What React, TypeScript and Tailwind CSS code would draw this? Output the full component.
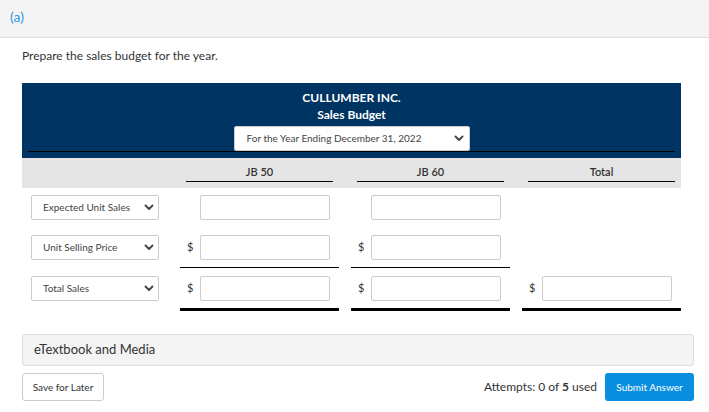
import React from 'react';

const Chevron = () => (
  <svg width="10" height="7" viewBox="0 0 10 7" className="shrink-0">
    <polyline points="1.5,1.5 5,5 8.5,1.5" fill="none" stroke="#4a4a4a" strokeWidth="2" strokeLinecap="round" strokeLinejoin="round" />
  </svg>
);

function FakeSelect({ label, className }: { label: string; className: string }) {
  return (
    <div className={`flex items-center justify-between bg-white border border-[#cccccc] rounded-[2px] text-[10px] text-[#444] ${className}`}>
      <span>{label}</span>
      <Chevron />
    </div>
  );
}

function Cell({ dollar, line }: { dollar?: boolean; line?: 'single' | 'double' }) {
  const border = line === 'single' ? 'pb-[7px] border-b border-black' : line === 'double' ? 'pb-[7px] border-b-[3px] border-black' : '';
  return (
    <div className={border}>
      <div className="flex items-center h-[25px]">
        <span className="w-[20px] pl-[7px] text-[11px] text-[#333]">{dollar ? '$' : ''}</span>
        <div className="w-[130px] h-[25px] bg-white border border-[#cccccc] rounded-[2px]" />
      </div>
    </div>
  );
}

export default function App() {
  return (
    <div className="w-[709px] h-[412px] bg-white overflow-hidden text-[#333]" style={{ fontFamily: 'Lato, "Noto Sans", sans-serif' }}>
      <div className="h-[38px] bg-[#f4f4f4] border-b border-[#dddddd] px-[10px] pt-[4px]">
        <span className="text-[14px] text-[#2b9be0]">(a)</span>
      </div>

      <div className="pl-[22px] pr-[15px]">
        <p className="mt-[10px] text-[12px] leading-[16px] text-[#333]">Prepare the sales budget for the year.</p>

        <div className="mt-[19px] w-[659px]">
          <div className="bg-[#003462] pt-[7px] pb-[6px] px-[6px] flex flex-col items-center">
            <div className="text-white font-bold text-[12px] leading-[16px]">CULLUMBER INC.</div>
            <div className="text-white font-bold text-[12px] leading-[17px]">Sales Budget</div>
            <FakeSelect label="For the Year Ending December 31, 2022" className="mt-[3px] w-[236px] h-[25px] pl-[12px] pr-[5px] text-[#333]" />
            <div className="w-full h-px bg-black" />
          </div>

          <div className="bg-[#e5e5e5] h-[30px] grid grid-cols-[146px_159px_159px_159px] gap-x-[12px]">
            <div />
            {['JB 50', 'JB 60', 'Total'].map((h) => (
              <div key={h} className="px-[6px] pt-[6px]">
                <div className="text-center text-[11px] font-semibold leading-[16px] pb-[1px] border-b border-black">{h}</div>
              </div>
            ))}
          </div>

          <div className="grid grid-cols-[146px_159px_159px_159px] gap-x-[12px] pt-[7px]">
            <div className="pl-[9px]">
              <FakeSelect label="Expected Unit Sales" className="w-[128px] h-[25px] pl-[11px] pr-[4px]" />
            </div>
            <Cell />
            <Cell />
            <div />
          </div>

          <div className="grid grid-cols-[146px_159px_159px_159px] gap-x-[12px] mt-[15px]">
            <div className="pl-[9px]">
              <FakeSelect label="Unit Selling Price" className="w-[128px] h-[25px] pl-[11px] pr-[4px]" />
            </div>
            <Cell dollar line="single" />
            <Cell dollar line="single" />
            <div />
          </div>

          <div className="grid grid-cols-[146px_159px_159px_159px] gap-x-[12px] mt-[8px]">
            <div className="pl-[9px]">
              <FakeSelect label="Total Sales" className="w-[128px] h-[25px] pl-[11px] pr-[4px]" />
            </div>
            <Cell dollar line="double" />
            <Cell dollar line="double" />
            <Cell dollar line="double" />
          </div>
        </div>

        <div className="mt-[23px] h-[32px] bg-[#f4f4f4] border border-[#dddddd] rounded-[3px] flex items-center pl-[11px] text-[13px] text-[#333]">
          eTextbook and Media
        </div>

        <div className="mt-[7px] flex items-center justify-between">
          <button className="h-[28px] w-[82px] bg-white border border-[#cccccc] rounded-[3px] text-[10px] text-[#333]">Save for Later</button>
          <div className="flex items-center gap-[8px]">
            <span className="text-[12px] text-[#333]">Attempts: 0 of <span className="font-bold">5</span> used</span>
            <button className="h-[28px] w-[89px] bg-[#0a8fe0] rounded-[3px] text-[10px] text-white">Submit Answer</button>
          </div>
        </div>
      </div>
    </div>
  );
}
